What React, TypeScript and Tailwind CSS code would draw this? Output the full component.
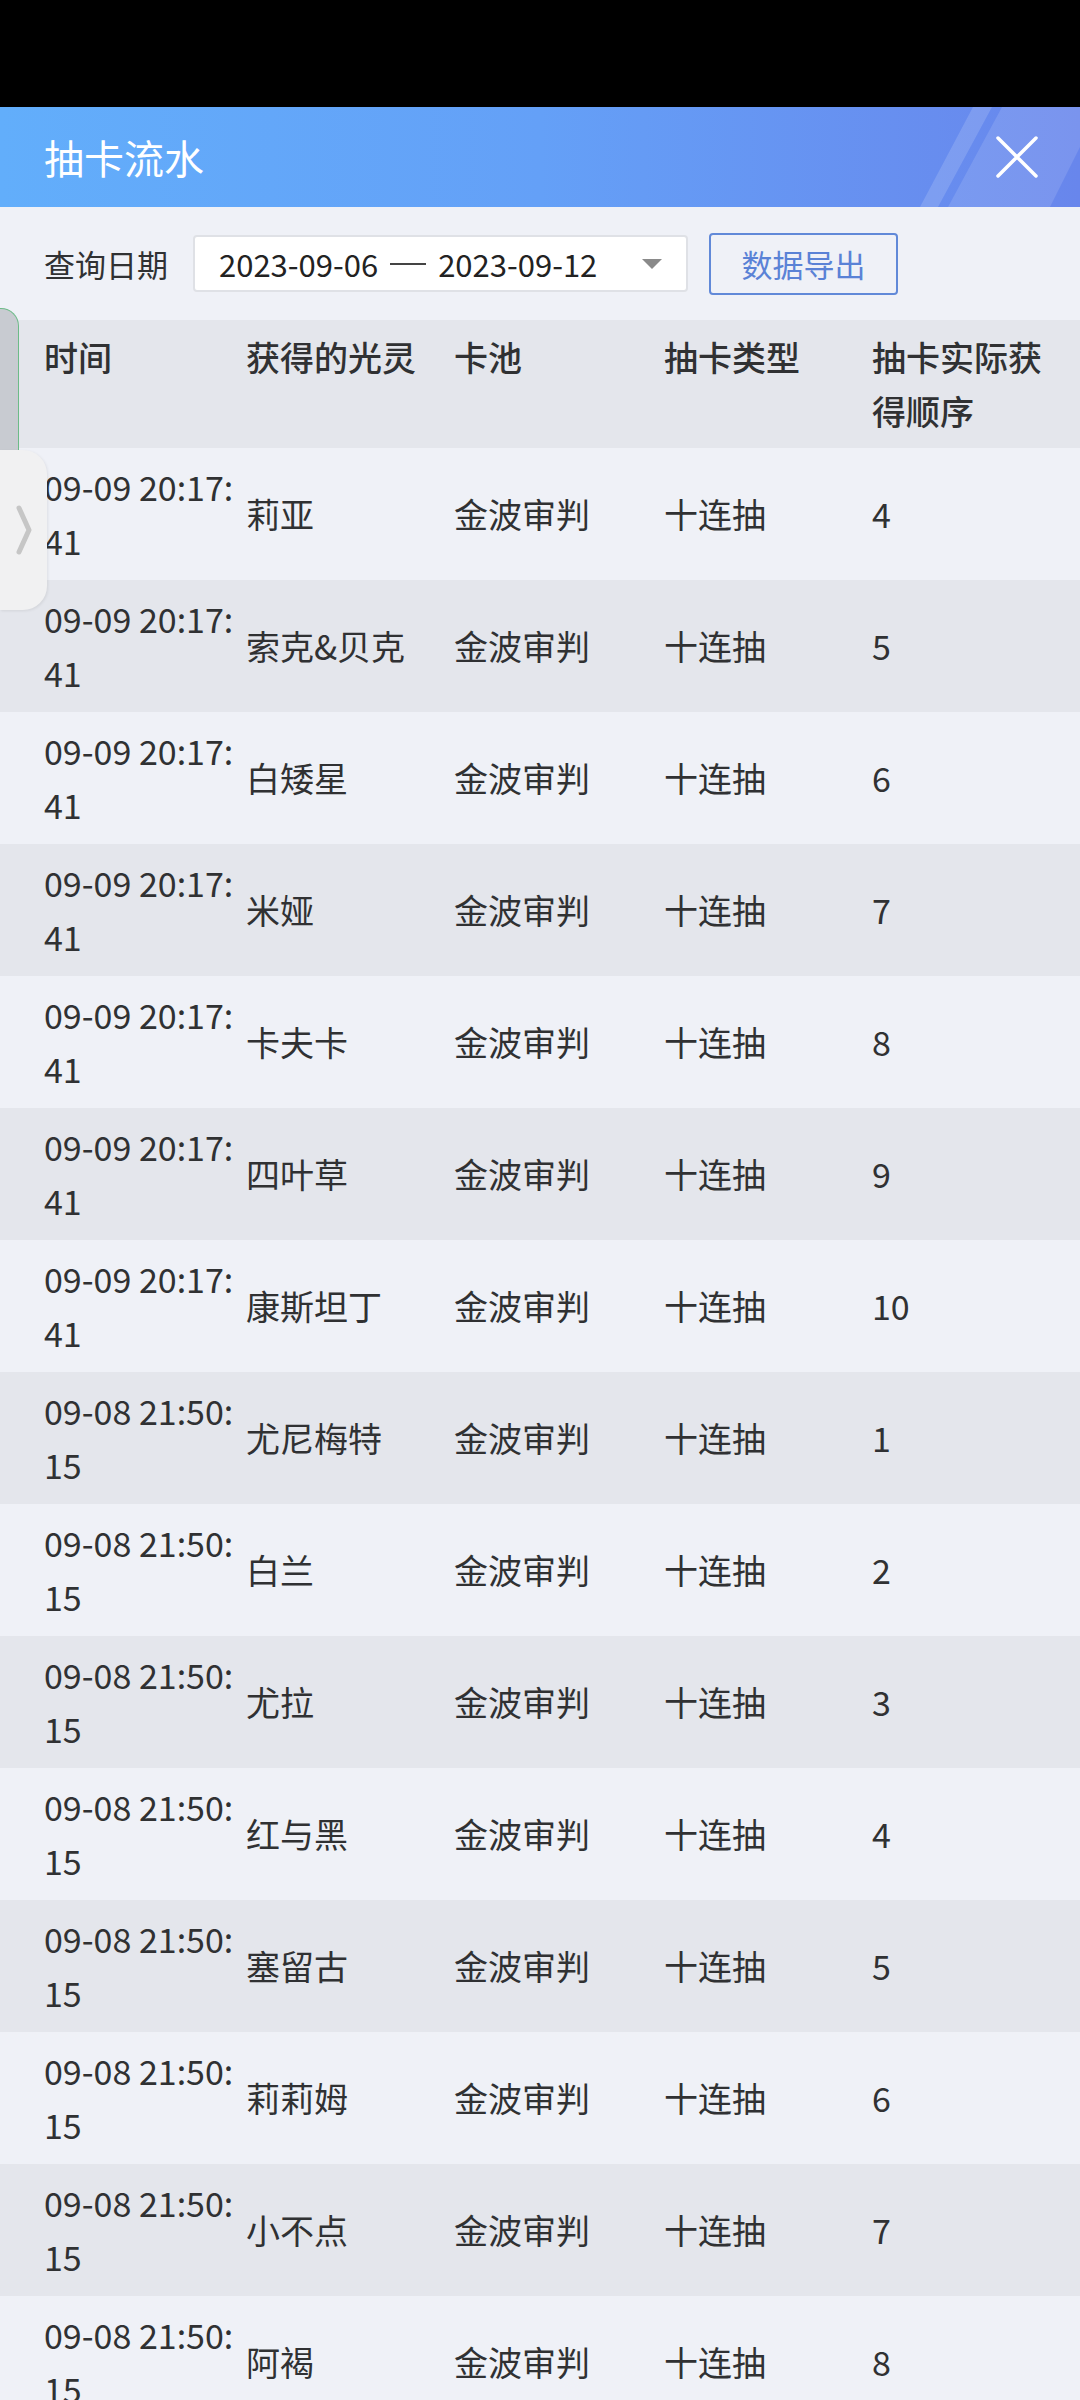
const rows = [
  ['09-09 20:17:41', '莉亚', '4'],
  ['09-09 20:17:41', '索克&贝克', '5'],
  ['09-09 20:17:41', '白矮星', '6'],
  ['09-09 20:17:41', '米娅', '7'],
  ['09-09 20:17:41', '卡夫卡', '8'],
  ['09-09 20:17:41', '四叶草', '9'],
  ['09-09 20:17:41', '康斯坦丁', '10'],
  ['09-08 21:50:15', '尤尼梅特', '1'],
  ['09-08 21:50:15', '白兰', '2'],
  ['09-08 21:50:15', '尤拉', '3'],
  ['09-08 21:50:15', '红与黑', '4'],
  ['09-08 21:50:15', '塞留古', '5'],
  ['09-08 21:50:15', '莉莉姆', '6'],
  ['09-08 21:50:15', '小不点', '7'],
  ['09-08 21:50:15', '阿褐', '8'],
];

const cols = 'grid grid-cols-[202px_208px_210px_208px_208px] pl-[44px]';

export default function App() {
  return (
    <div className="relative min-h-screen w-[1080px] overflow-hidden bg-[#eff1f7] font-['Noto_Sans_CJK_SC',sans-serif] text-[#303133]">
      <div className="h-[107px] bg-black" />

      {/* title bar */}
      <header className="relative flex h-[100px] items-center justify-between overflow-hidden bg-gradient-to-r from-[#62aefb] via-[#64a0f7] to-[#6886ec] pl-[44px] pr-[42px]">
        <svg className="absolute inset-0 h-full w-full" viewBox="0 0 1080 100" preserveAspectRatio="none">
          <polygon points="973,0 992,0 938,100 920,100" fill="#ffffff" fillOpacity="0.15" />
          <polygon points="1002,0 1080,0 1080,40 1050,100 948,100" fill="#ffffff" fillOpacity="0.12" />
        </svg>
        <h1 className="relative text-[40px] leading-none text-white">抽卡流水</h1>
        <svg className="relative h-[42px] w-[42px]" viewBox="0 0 42 42">
          <path d="M2 2 L40 40 M40 2 L2 40" stroke="#ffffff" strokeWidth="3.5" strokeLinecap="round" fill="none" />
        </svg>
      </header>

      {/* filter */}
      <div className="flex h-[113px] items-center px-[44px]">
        <span className="text-[31px] leading-none">查询日期</span>
        <div className="ml-[25px] flex h-[57px] w-[495px] items-center rounded-[4px] border-2 border-[#dfe1e6] bg-white pl-[24px] pr-[24px]">
          <span className="text-[31px] leading-none text-[#222]">2023-09-06</span>
          <span className="mx-[12px] h-[2px] w-[36px] bg-[#444]" />
          <span className="text-[31px] leading-none text-[#222]">2023-09-12</span>
          <svg className="ml-auto h-[10px] w-[20px]" viewBox="0 0 20 10">
            <polygon points="0,0 20,0 10,10" fill="#8a8a8a" />
          </svg>
        </div>
        <button className="ml-[21px] flex h-[62px] w-[189px] items-center justify-center rounded-[4px] border-2 border-[#6189d8] text-[31px] leading-none text-[#5a82d6]">
          数据导出
        </button>
      </div>

      {/* table */}
      <div className={`${cols} bg-[#e4e6ec] py-[10px] text-[34px] font-medium leading-[54px]`}>
        <div className="pr-[10px]">时间</div>
        <div className="pr-[10px]">获得的光灵</div>
        <div className="pr-[10px]">卡池</div>
        <div className="pr-[10px]">抽卡类型</div>
        <div className="break-all pr-[10px]">抽卡实际获得顺序</div>
      </div>
      {rows.map((r, i) => (
        <div
          key={i}
          className={`${cols} h-[132px] items-center text-[34px] leading-[54px] ${i % 2 === 0 ? 'bg-[#eff1f7]' : 'bg-[#e4e6ec]'}`}
        >
          <div className="break-all pr-[10px]">{r[0]}</div>
          <div className="pr-[10px]">{r[1]}</div>
          <div className="pr-[10px]">金波审判</div>
          <div className="pr-[10px]">十连抽</div>
          <div className="pr-[10px]">{r[2]}</div>
        </div>
      ))}

      {/* side drawer tab */}
      <div className="absolute left-0 top-[308px] h-[170px] w-[19px] rounded-tr-[18px] border border-l-0 border-[#6dbb88] bg-[#c8cbd1]" />
      <div className="absolute left-0 top-[450px] flex h-[160px] w-[47px] items-center justify-center rounded-r-[24px] bg-[#f1f1f2] shadow-[1px_1px_3px_rgba(0,0,0,0.08)]">
        <svg className="h-[50px] w-[18px]" viewBox="0 0 18 50">
          <polyline points="4,3 14,25 4,47" fill="none" stroke="#c6c6c6" strokeWidth="5" strokeLinecap="round" strokeLinejoin="round" />
        </svg>
      </div>
    </div>
  );
}
